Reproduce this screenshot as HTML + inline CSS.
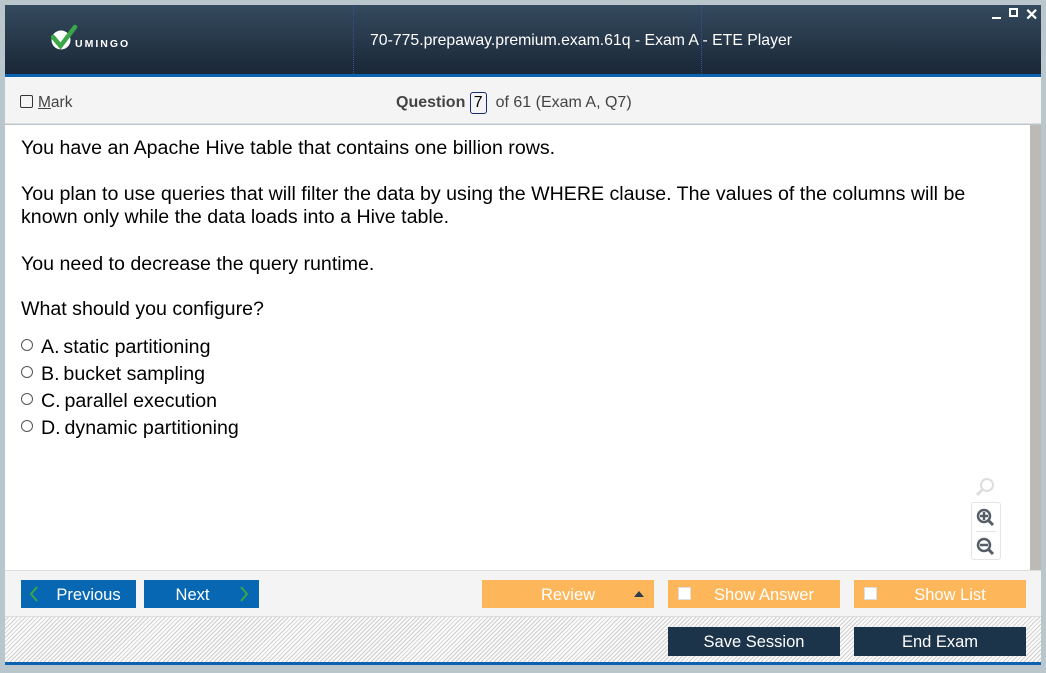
<!DOCTYPE html>
<html><head><meta charset="utf-8"><style>
*{margin:0;padding:0;box-sizing:border-box}
body{width:1046px;height:673px;background:#b9c6cc;position:relative;overflow:hidden;font-family:"Liberation Sans",sans-serif}
.a{position:absolute}
.hdr{left:5px;top:5px;width:1036px;height:69px;background:linear-gradient(#344a5e,#1a2737)}
.bl{left:5px;top:74px;width:1036px;height:3px;background:#0a62b0}
.tb{left:5px;top:77px;width:1036px;height:47px;background:#f4f4f4;border-bottom:1px solid #ddd}
.ct{left:5px;top:125px;width:1025px;height:445px;background:#fff}
.sb{left:1030px;top:125px;width:11px;height:445px;background:#bdbab5}
.nav{left:5px;top:570px;width:1036px;height:47px;background:#f4f4f4;border-top:1px solid #ddd;border-bottom:1px solid #ddd}
.hatch{left:5px;top:617px;width:1036px;height:45px;background:repeating-linear-gradient(135deg,#fafafa 0 2px,#cfcfcf 2px 3px)}
.bb{left:5px;top:662px;width:1036px;height:3px;background:#0a62b0}
.q{font-size:19.6px;color:#000;left:21px;line-height:23px;white-space:nowrap}
.btn{height:28px;color:#fff;font-size:16.5px;line-height:30px;text-align:center;white-space:nowrap}
.blue{background:#0767b3}
.or{background:#fdb75a}
.dk{background:#1c344a}
.cb{width:13px;height:13px;background:#fff;border:1px solid #ddd;top:7px}
.opt{font-size:19.6px;left:21px;white-space:nowrap}
.rad{display:inline-block;width:12px;height:12px;border:1px solid #555;border-radius:50%;margin-right:8px;vertical-align:2px}
</style></head><body>
<div class="a hdr"></div>
<div class="a" style="left:353px;top:5px;height:69px;border-left:1px dotted #3b4fa0"></div>
<div class="a" style="left:701px;top:5px;height:69px;border-left:1px dotted #3b4fa0"></div>
<svg class="a" style="left:48px;top:22px" width="90" height="30" viewBox="0 0 90 30">
<circle cx="13" cy="18" r="9.5" fill="#fff"/>
<path d="M5 15 L12.5 24 L27 5" stroke="#3aa646" stroke-width="4.5" fill="none" stroke-linecap="round"/>
<text x="27" y="25" font-family="Liberation Sans" font-weight="bold" font-size="10.5" fill="#fff" letter-spacing="2">UMINGO</text>
</svg>
<div class="a" style="left:370px;top:32px;color:#fff;font-size:15.8px;white-space:nowrap">70-775.prepaway.premium.exam.61q - Exam A - ETE Player</div>
<div class="a" style="left:992px;top:17px;width:9px;height:2px;background:#fff"></div>
<div class="a" style="left:1009px;top:8px;width:9px;height:9px;border:2px solid #fff"></div>
<div class="a" style="left:1025px;top:5px;color:#fff;font-size:16px;font-weight:bold">✕</div>
<div class="a bl"></div>
<div class="a tb"></div>
<div class="a" style="left:20px;top:95px;width:13px;height:13px;border:1px solid #333;border-radius:2px"></div>
<div class="a" style="left:38px;top:94px;font-size:15.5px;color:#444"><u>M</u>ark</div>
<div class="a" style="left:396px;top:92px;font-size:16px;color:#444;white-space:nowrap"><b>Question</b> <span style="display:inline-block;border:1px solid #1a2a6a;border-radius:3px;padding:1px 3px;color:#000">7</span>&nbsp; of 61 (Exam A, Q7)</div>
<div class="a ct"></div>
<div class="a sb"></div>
<div class="a q" style="top:137px">You have an Apache Hive table that contains one billion rows.</div>
<div class="a q" style="top:183px">You plan to use queries that will filter the data by using the WHERE clause. The values of the columns will be<br>known only while the data loads into a Hive table.</div>
<div class="a q" style="top:253px">You need to decrease the query runtime.</div>
<div class="a q" style="top:298px">What should you configure?</div>
<div class="a opt" style="top:336px"><span class="rad"></span>A.&thinsp;static partitioning</div>
<div class="a opt" style="top:363px"><span class="rad"></span>B.&thinsp;bucket sampling</div>
<div class="a opt" style="top:390px"><span class="rad"></span>C.&thinsp;parallel execution</div>
<div class="a opt" style="top:417px"><span class="rad"></span>D.&thinsp;dynamic partitioning</div>
<svg class="a" style="left:974px;top:476px" width="22" height="22"><circle cx="13" cy="9" r="6" stroke="#ddd" stroke-width="2" fill="none"/><path d="M8 14 L3 19" stroke="#ddd" stroke-width="3"/></svg>
<div class="a" style="left:971px;top:502px;width:30px;height:58px;border:1px solid #e5e5e5;border-radius:3px;background:#fff"></div>
<div class="a" style="left:976px;top:531px;width:20px;border-top:1px solid #e5e5e5"></div>
<svg class="a" style="left:975px;top:507px" width="22" height="22"><circle cx="9" cy="9" r="6" stroke="#555e66" stroke-width="2.5" fill="none"/><path d="M9 5v8M5 9h8" stroke="#555e66" stroke-width="2.5"/><path d="M13 13 L18 18" stroke="#555e66" stroke-width="3"/></svg>
<svg class="a" style="left:975px;top:536px" width="22" height="22"><circle cx="9" cy="9" r="6" stroke="#555e66" stroke-width="2.5" fill="none"/><path d="M5 9h8" stroke="#555e66" stroke-width="2.5"/><path d="M13 13 L18 18" stroke="#555e66" stroke-width="3"/></svg>
<div class="a nav"></div>
<div class="a btn blue" style="left:21px;top:580px;width:115px;padding-left:20px">Previous</div>
<svg class="a" style="left:28px;top:586px" width="12" height="16"><path d="M9 1 L3 8 L9 15" stroke="#3aa646" stroke-width="2" fill="none"/></svg>
<div class="a btn blue" style="left:144px;top:580px;width:115px;padding-right:18px">Next</div>
<svg class="a" style="left:238px;top:586px" width="12" height="16"><path d="M3 1 L9 8 L3 15" stroke="#3aa646" stroke-width="2" fill="none"/></svg>
<div class="a btn or" style="left:482px;top:580px;width:172px">Review</div>
<div class="a" style="left:634px;top:591px;width:0;height:0;border-left:5px solid transparent;border-right:5px solid transparent;border-bottom:6px solid #2a3c4e"></div>
<div class="a btn or" style="left:668px;top:580px;width:172px;padding-left:20px">Show Answer<div class="a cb" style="left:10px"></div></div>
<div class="a btn or" style="left:854px;top:580px;width:172px;padding-left:20px">Show List<div class="a cb" style="left:10px"></div></div>
<div class="a hatch"></div>
<div class="a btn dk" style="left:668px;top:627px;width:172px;height:29px">Save Session</div>
<div class="a btn dk" style="left:854px;top:627px;width:172px;height:29px">End Exam</div>
<div class="a bb"></div>
</body></html>
